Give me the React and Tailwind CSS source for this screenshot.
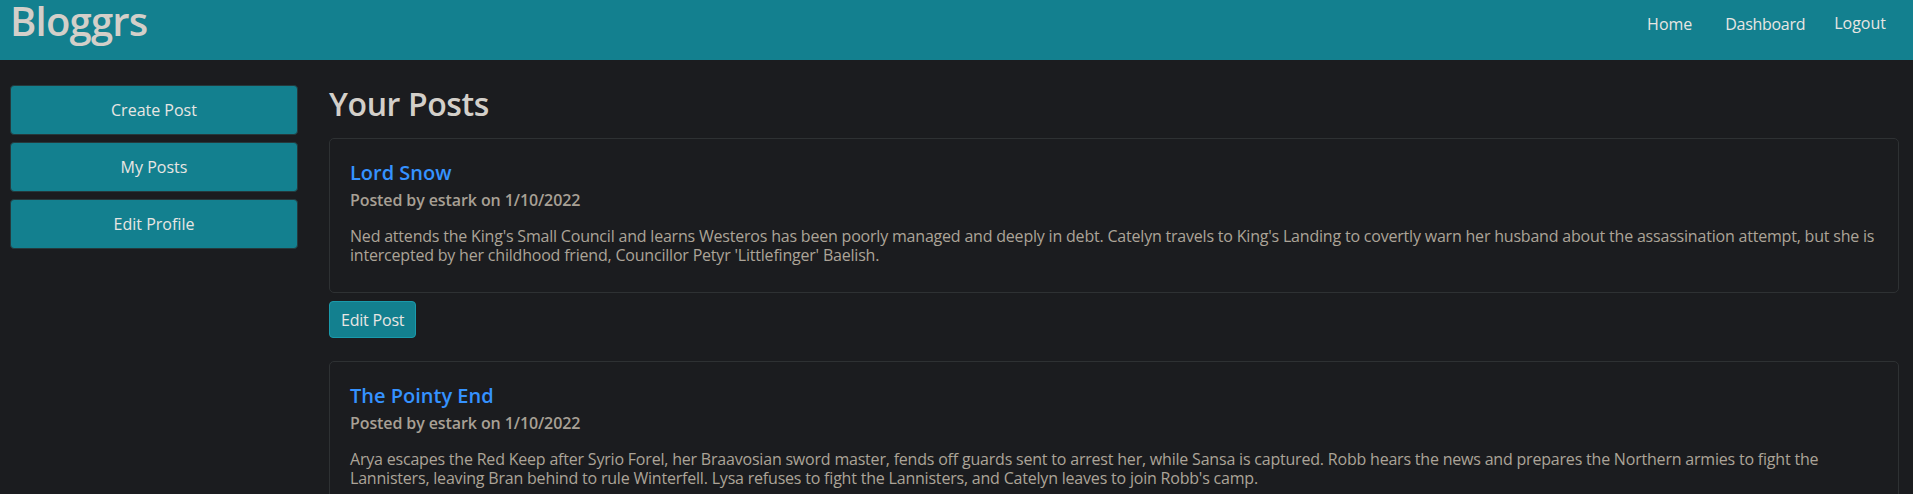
import React from 'react';

const posts = [
  {
    title: 'Lord Snow',
    author: 'estark',
    date: '1/10/2022',
    body: "Ned attends the King's Small Council and learns Westeros has been poorly managed and deeply in debt. Catelyn travels to King's Landing to covertly warn her husband about the assassination attempt, but she is intercepted by her childhood friend, Councillor Petyr 'Littlefinger' Baelish.",
  },
  {
    title: 'The Pointy End',
    author: 'estark',
    date: '1/10/2022',
    body: "Arya escapes the Red Keep after Syrio Forel, her Braavosian sword master, fends off guards sent to arrest her, while Sansa is captured. Robb hears the news and prepares the Northern armies to fight the Lannisters, leaving Bran behind to rule Winterfell. Lysa refuses to fight the Lannisters, and Catelyn leaves to join Robb's camp.",
  },
];

const PostCard = ({ post }) => (
  <div className="mb-[23px]">
    <div className="border border-[#2e3133] rounded-[5px] pt-[22px] px-[20px] pb-[27px]">
      <h5 className="text-[20px] leading-[24px] font-semibold text-[#3592ff]">{post.title}</h5>
      <h6 className="mt-[6px] text-[16px] leading-[19px] font-semibold text-[#a8a095] tracking-[-0.1px]">
        Posted by {post.author} on {post.date}
      </h6>
      <p className="mt-[17px] text-[16px] leading-[19px] text-[#aca498] tracking-[-0.2px]">{post.body}</p>
    </div>
    {post.title === 'Lord Snow' && (
      <button className="mt-[8px] h-[37px] px-[11px] rounded-[4px] border border-[#1a9aab] bg-[#13808f] text-[16px] text-[#e8e6e3] tracking-[-0.2px]">
        Edit Post
      </button>
    )}
  </div>
);

const App = () => {
  return (
    <div
      className="min-h-screen bg-[#1b1c1f] text-[#d3cfc9]"
      style={{ fontFamily: '"Open Sans", "Noto Sans", sans-serif' }}
    >
      <header className="h-[60px] bg-[#13808f] flex items-start justify-between pl-[10px] pr-[27px]">
        <h1 className="pt-[1px] text-[40px] leading-[40px] font-semibold text-[#d3cfc9] tracking-[-0.8px]">Bloggrs</h1>
        <nav className="flex items-center pt-[12px] text-[16px] text-[#e8e6e3]">
          <a className="mr-[33px]">Home</a>
          <a className="mr-[29px] tracking-[-0.3px]">Dashboard</a>
          <a className="-mt-[2px]">Logout</a>
        </nav>
      </header>

      <div className="flex gap-[31px] pl-[10px] pr-[14px]">
        <aside className="w-[288px] shrink-0 pt-[25px] flex flex-col gap-[7px]">
          {['Create Post', 'My Posts', 'Edit Profile'].map((label) => (
            <button
              key={label}
              className="h-[50px] w-full rounded-[4px] border border-[#25393c] bg-[#13808f] text-[16px] text-[#e8e6e3]"
            >
              {label}
            </button>
          ))}
        </aside>

        <main className="flex-1 min-w-0 pt-[25px]">
          <h2 className="text-[32px] leading-[38px] font-semibold text-[#d3cfc9] mb-[15px] tracking-[-0.4px]">Your Posts</h2>
          {posts.map((post) => (
            <PostCard key={post.title} post={post} />
          ))}
        </main>
      </div>
    </div>
  );
};

export default App;
